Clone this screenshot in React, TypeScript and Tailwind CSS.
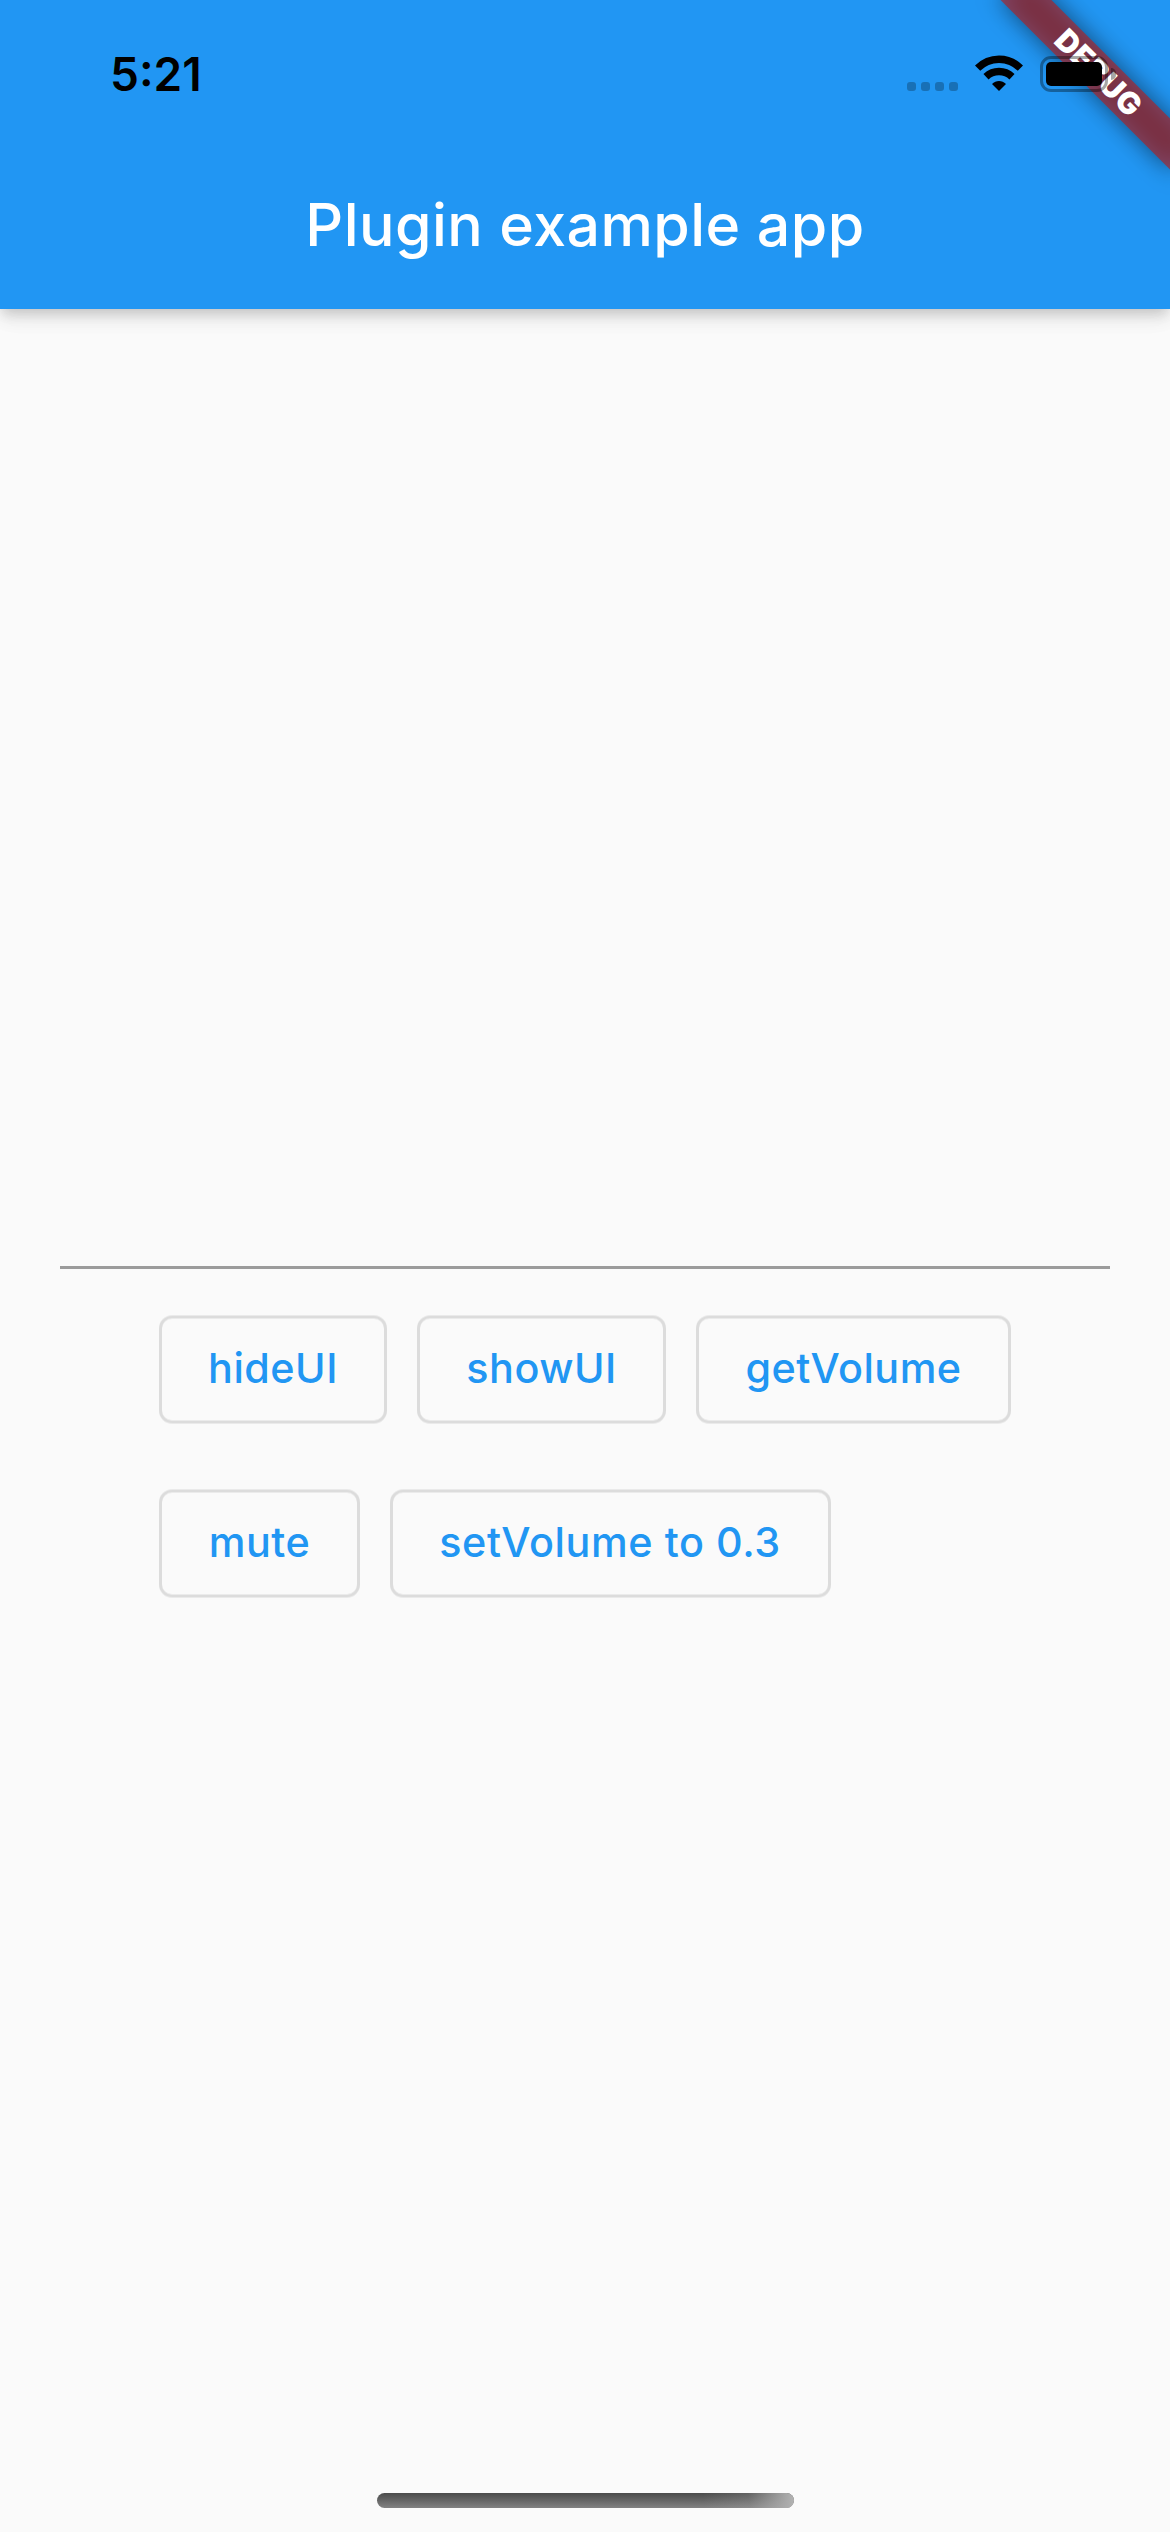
import React from "react";

function ActionButton({ label, box, text }: { label: string; box: string; text: string }) {
  return (
    <button
      className={`relative flex h-[108px] shrink-0 items-center justify-center whitespace-nowrap pb-[2px] text-[41.3px] font-medium text-[#2196f3] ${box}`}
    >
      <span className="absolute inset-0 translate-y-[0.5px] rounded-[13px] border-[3px] border-[#dcdcdc] will-change-transform" />
      <span className={`leading-[50px] ${text}`}>{label}</span>
    </button>
  );
}

function DebugBanner() {
  return (
    <div className="absolute top-0 right-0 size-[260px] overflow-hidden">
      <div className="absolute top-[54px] left-[68px] h-9 w-[240px] rotate-45">
        <div className="absolute inset-0 bg-black/50 blur-[12px]" />
        <div className="absolute inset-0 bg-[#b71c1ca0]" />
        <div className="relative flex h-full items-center justify-center pl-[2px] text-[30.6px] leading-none font-black tracking-[0.4px] text-white">
          DEBUG
        </div>
      </div>
    </div>
  );
}

function StatusBar() {
  return (
    <div className="relative flex h-[141px] items-start justify-between pt-[55px] pr-[54px] pl-[110px]">
      <span className="-mt-px text-[46px] leading-[40px] font-semibold text-black">5:21</span>
      <div className="flex items-start pt-px">
        <div className="mt-[26px] mr-[59px] flex gap-[5px]">
          <i className="size-[9px] rounded-[3px] bg-black/25" />
          <i className="size-[9px] rounded-[3px] bg-black/25" />
          <i className="size-[9px] rounded-[3px] bg-black/25" />
          <i className="size-[9px] rounded-[3px] bg-black/25" />
        </div>
        <svg className="-mt-px mr-[17px] -ml-[42px] h-9 w-12" viewBox="0 0 48 36" fill="none">
          <path d="M2.6 13.2C14.5 1.2 33.5 1.2 45.4 13.2" stroke="#000" strokeWidth="7.4" />
          <path d="M11 21.7C18.3 14.8 29.7 14.8 37 21.7" stroke="#000" strokeWidth="7.4" />
          <path d="M17 29.1C21 24.8 27 24.8 31 29.1L24 36Z" fill="#000" />
        </svg>
        <div className="h-9 w-[68px] rounded-[11px] border-[3px] border-black/35 p-[3px]">
          <div className="h-6 w-14 rounded-[5px] bg-black" />
        </div>
        <div className="mt-3 ml-[3px] h-3 w-[5px] rounded-r-full bg-black/35" />
      </div>
    </div>
  );
}

export default function App() {
  return (
    <div className="relative flex h-[2532px] w-[1170px] flex-col overflow-hidden bg-[#fafafa] font-['Inter',sans-serif]">
      <header className="relative h-[309px] shrink-0 bg-[#2196f3] shadow-[0_6px_12px_-3px_rgba(0,0,0,0.16),0_12px_15px_0_rgba(0,0,0,0.06),0_3px_30px_0_rgba(0,0,0,0.05)]">
        <DebugBanner />
        <StatusBar />
        <h1 className="flex h-[168px] items-center justify-center pb-[2px] text-[59px] leading-none font-medium tracking-[0.45px] text-white">
          Plugin example app
        </h1>
      </header>
      <main className="flex grow flex-col pt-[957px]">
        <hr className="mx-[60px] h-[3px] shrink-0 border-0 bg-[#9b9b9b]" />
        <div className="mt-[46px] ml-[159px] flex gap-[30px]">
          <ActionButton label="hideUI" box="w-[228px]" text="tracking-[0.5px]" />
          <ActionButton label="showUI" box="w-[249px]" text="tracking-[0.5px]" />
          <ActionButton label="getVolume" box="w-[315px]" text="tracking-[0.5px]" />
        </div>
        <div className="mt-[66px] ml-[159px] flex gap-[30px]">
          <ActionButton label="mute" box="w-[201px]" text="tracking-[0.5px]" />
          <ActionButton label="setVolume to 0.3" box="w-[441px] pr-[1px]" text="tracking-[0.6px]" />
        </div>
      </main>
      <div className="mb-[24px] ml-[377px] h-[15px] w-[417px] shrink-0 overflow-hidden rounded-full bg-linear-to-b from-[#4b4b4b] to-[#828282]">
        <div className="ml-auto h-full w-[90px] bg-linear-[80deg] from-[#b4b4b400] via-[#b4b4b433] to-[#b4b4b4]" />
      </div>
    </div>
  );
}
